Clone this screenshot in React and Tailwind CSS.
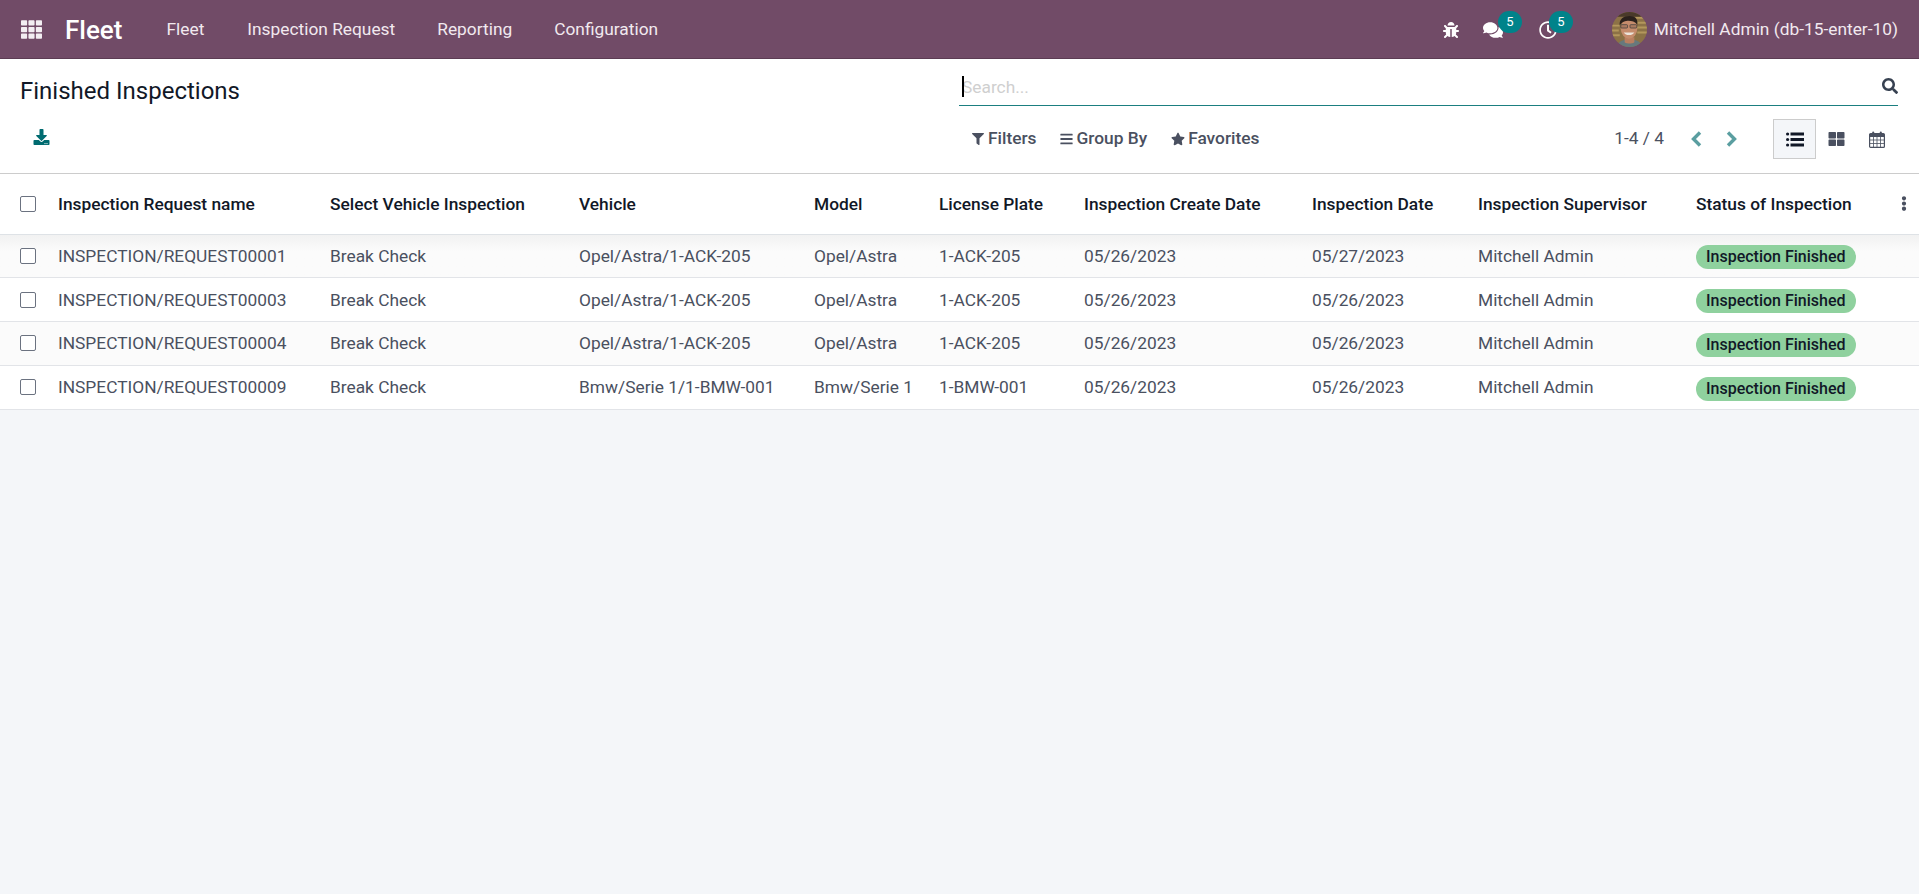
import { FaTh, FaBug, FaComments, FaRegClock, FaDownload, FaSearch, FaFilter, FaBars, FaStar, FaThLarge, FaEllipsisV } from "react-icons/fa";

const columns = [
  { label: "Inspection Request name", className: "w-[272px]" },
  { label: "Select Vehicle Inspection", className: "w-[249px]" },
  { label: "Vehicle", className: "w-[235px]" },
  { label: "Model", className: "w-[125px]" },
  { label: "License Plate", className: "w-[145px]" },
  { label: "Inspection Create Date", className: "w-[228px]" },
  { label: "Inspection Date", className: "w-[166px]" },
  { label: "Inspection Supervisor", className: "w-[218px]" },
  { label: "Status of Inspection", className: "w-[204px]" },
];

const rows = [
  ["INSPECTION/REQUEST00001", "Break Check", "Opel/Astra/1-ACK-205", "Opel/Astra", "1-ACK-205", "05/26/2023", "05/27/2023", "Mitchell Admin"],
  ["INSPECTION/REQUEST00003", "Break Check", "Opel/Astra/1-ACK-205", "Opel/Astra", "1-ACK-205", "05/26/2023", "05/26/2023", "Mitchell Admin"],
  ["INSPECTION/REQUEST00004", "Break Check", "Opel/Astra/1-ACK-205", "Opel/Astra", "1-ACK-205", "05/26/2023", "05/26/2023", "Mitchell Admin"],
  ["INSPECTION/REQUEST00009", "Break Check", "Bmw/Serie 1/1-BMW-001", "Bmw/Serie 1", "1-BMW-001", "05/26/2023", "05/26/2023", "Mitchell Admin"],
];

function Avatar() {
  return (
    <svg viewBox="0 0 36 36" className="w-[35px] h-[35px] rounded-full">
      <rect width="36" height="36" fill="#8c7246" />
      <path d="M24 6h12M24 11h12M25 16h11M26 21h10M0 14h8M0 19h7M0 24h8" stroke="#b3975c" strokeWidth="2" />
      <path d="M0 0h36v5H0z" fill="#4a3a2a" />
      <path d="M4 36c2-5 7-8 14-8s12 3 14 8z" fill="#66797d" />
      <path d="M13 26h10v5c-3 2-7 2-10 0z" fill="#b97f60" />
      <ellipse cx="17.500" cy="17" rx="8.500" ry="10.500" fill="#c58c6c" />
      <path d="M8 14c-1-7 4-10 10-10s9 3 8 9c-2-3-6-4-9-4s-7 1-9 5z" fill="#2b211c" />
      <rect x="9" y="13" width="7" height="3.500" rx="1" fill="#a97a60" stroke="#3a3a3a" strokeWidth="0.7" />
      <rect x="18.500" y="13" width="7" height="3.500" rx="1" fill="#a97a60" stroke="#3a3a3a" strokeWidth="0.7" />
      <path d="M12 21c2 3.500 9 3.500 11 0z" fill="#ece4da" />
    </svg>
  );
}

function ListIcon() {
  return (
    <svg viewBox="0 0 18 15" className="w-[18px] h-[15px] fill-[#111827]">
      <circle cx="1.600" cy="2" r="1.600" />
      <circle cx="1.600" cy="7.500" r="1.600" />
      <circle cx="1.600" cy="13" r="1.600" />
      <rect x="4.500" y="0.500" width="13.500" height="3" />
      <rect x="4.500" y="6" width="13.500" height="3" />
      <rect x="4.500" y="11.500" width="13.500" height="3" />
    </svg>
  );
}

function CalendarIcon() {
  return (
    <svg viewBox="0 0 16 17" className="w-4 h-[17px] text-[#4a5060]">
      <rect x="0.600" y="2.600" width="14.800" height="13.800" rx="1" fill="none" stroke="currentColor" strokeWidth="1.200" />
      <rect x="1" y="3" width="14" height="3" fill="currentColor" />
      <rect x="3.200" y="0.500" width="2" height="3.600" rx="1" fill="currentColor" />
      <rect x="10.800" y="0.500" width="2" height="3.600" rx="1" fill="currentColor" />
      <path d="M1 9h14M1 12.500h14M4.500 6v10M8 6v10M11.500 6v10" stroke="currentColor" strokeWidth="0.800" />
    </svg>
  );
}

function Chevron({ left }) {
  return (
    <svg viewBox="0 0 12 16" className="w-3 h-4" fill="none" stroke="#5a9ea0" strokeWidth="3.400">
      <path d={left ? "M10 1.500 3.500 8l6.500 6.500" : "M2 1.500 8.500 8 2 14.500"} />
    </svg>
  );
}

function Badge({ className }) {
  return (
    <span className={`absolute flex items-center justify-center w-[24px] h-[22px] rounded-full bg-[#00838a] text-white text-[13px] ${className}`}>
      5
    </span>
  );
}

function CheckBox() {
  return <span className="block w-4 h-4 rounded-[2px] border border-[#6b7280] bg-white" />;
}

export default function App() {
  return (
    <div className="flex flex-col h-screen bg-[#f4f6f9] text-[#4a5060] font-[family-name:Roboto,sans-serif] text-[17.33px] overflow-hidden">
      {/* Top bar */}
      <nav className="flex items-center h-[59px] shrink-0 pt-[1px] bg-[#714b67] border-b border-[#5c3c53] text-[#f1e9ef]">
        <FaTh className="ml-[20px] w-[23px] h-[21px] text-[#f3eef2]" />
        <span className="ml-[22px] text-[26px] font-medium text-white leading-none">Fleet</span>
        <span className="ml-[44px]">Fleet</span>
        <span className="ml-[43px]">Inspection Request</span>
        <span className="ml-[42px]">Reporting</span>
        <span className="ml-[42px]">Configuration</span>
        <div className="ml-auto flex items-center pr-[21px]">
          <FaBug className="w-4 h-4 text-white" />
          <div className="relative ml-[24px]">
            <FaComments className="w-5 h-5 text-white" />
            <Badge className="left-[15px] -top-[9px]" />
          </div>
          <div className="relative ml-[36px]">
            <FaRegClock className="w-[18px] h-[18px] text-white" />
            <Badge className="left-[10px] -top-[10px]" />
          </div>
          <div className="ml-[55px] mr-[7px]"><Avatar /></div>
          <span>Mitchell Admin (db-15-enter-10)</span>
        </div>
      </nav>

      {/* Control panel */}
      <div className="grid grid-cols-[959px_1fr] h-[115px] shrink-0 bg-white border-b border-[#cccccc]">
        <div className="flex flex-col pl-[20px]">
          <h1 className="mt-[16px] text-[24px] leading-[32px] text-[#111827]">Finished Inspections</h1>
          <FaDownload className="ml-[13px] mt-[22px] w-[17px] h-[16px] text-[#006b70]" />
        </div>
        <div className="flex flex-col pr-[21px]">
          <div className="relative flex items-center h-[47px] border-b border-[#1b7f80] pl-[3px]">
            <span className="absolute left-[3px] top-[17px] w-[2px] h-[21px] bg-black" />
            <span className="mt-[12px] text-[#cfcfcf]">Search...</span>
            <FaSearch className="ml-auto mt-[7px] w-4 h-4 text-[#374151]" />
          </div>
          <div className="flex items-center mt-[13px] h-[40px] font-medium">
            <FaFilter className="ml-[13px] w-3 h-3" />
            <span className="ml-[4px]">Filters</span>
            <FaBars className="ml-[24px] w-[13px] h-[14px]" />
            <span className="ml-[3px]">Group By</span>
            <FaStar className="ml-[24px] w-[14px] h-[14px]" />
            <span className="ml-[3px]">Favorites</span>
            <span className="ml-auto font-normal">1-4 / 4</span>
            <div className="ml-[26px]"><Chevron left /></div>
            <div className="ml-[24px]"><Chevron /></div>
            <div className="ml-[35px] flex items-center justify-center w-[43px] h-[40px] bg-[#f4f6f9] border border-[#cccccc]">
              <ListIcon />
            </div>
            <FaThLarge className="ml-[12px] w-[17px] h-[16px]" />
            <div className="ml-[24px] mr-[13px]"><CalendarIcon /></div>
          </div>
        </div>
      </div>

      {/* List */}
      <table className="table-fixed w-full bg-white border-collapse">
        <colgroup>
          <col className="w-[52px]" />
          {columns.map((col) => <col key={col.label} className={col.className} />)}
          <col />
        </colgroup>
        <thead>
          <tr className="h-[60px] border-b border-[#dee2e6] text-[#111827]">
            <th className="pl-[20px]"><CheckBox /></th>
            {columns.map((col) => (
              <th key={col.label} className="px-[6px] pt-[2px] text-left font-medium whitespace-nowrap">{col.label}</th>
            ))}
            <th className="text-left pl-[4px]"><FaEllipsisV className="w-3 h-[15px] text-[#4a5060]" /></th>
          </tr>
        </thead>
        <tbody>
          {rows.map((row, i) => (
            <tr key={row[0]} className={`h-[43.75px] border-b border-[#e2e4e8] ${i === 0 ? "bg-linear-to-b from-[#f1f1f1] to-[#fbfbfb] to-40%" : i === 2 ? "bg-[#fbfbfb]" : "bg-white"}`}>
              <td className="pl-[20px]"><CheckBox /></td>
              {row.map((cell, j) => (
                <td key={j} className="px-[6px] pt-[2px] whitespace-nowrap">{cell}</td>
              ))}
              <td className="px-[6px] pt-[3px]">
                <span className="block w-fit px-[10px] h-[24px] text-[16px] leading-[24px] rounded-full bg-[#8fd19e] text-[#111827] font-medium whitespace-nowrap">Inspection Finished</span>
              </td>
              <td />
            </tr>
          ))}
        </tbody>
      </table>
    </div>
  );
}
